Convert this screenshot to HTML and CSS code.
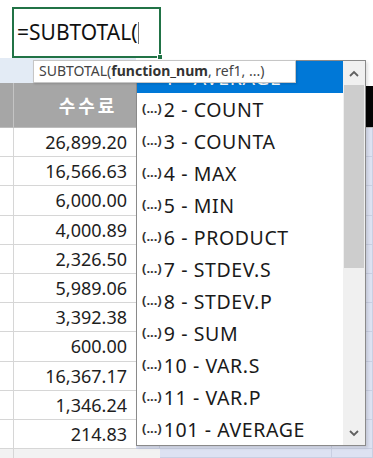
FILE: index.html
```html
<!DOCTYPE html>
<html lang="ko">
<head>
    <meta charset="UTF-8">
    <title>SUBTOTAL</title>
    <link rel="stylesheet" href="styles.css">
</head>
<body>
    <div class="sheet">
        <div class="editor-row">
            <div class="cell-editor">
                <span class="formula">=SUBTOTAL(</span><span class="caret"></span>
                <span class="fill-handle"></span>
            </div>
        </div>

        <div class="grid">
            <!-- strip row -->
            <div class="c strip"></div>
            <div class="c strip"></div>
            <div class="c blank"></div>
            <div class="c blank"></div>
            <div class="c blank"></div>

            <!-- header row -->
            <div class="c head"></div>
            <div class="c head title">수수료</div>
            <div class="c head dark"></div>
            <div class="c head dark"></div>
            <div class="c head dark"></div>

            <div class="c a"></div><div class="c num">26,899.20</div><div class="c lav"></div><div class="c lav"></div><div class="c lav"></div>
            <div class="c a"></div><div class="c num">16,566.63</div><div class="c lav"></div><div class="c lav"></div><div class="c lav"></div>
            <div class="c a"></div><div class="c num">6,000.00</div><div class="c lav"></div><div class="c lav"></div><div class="c lav"></div>
            <div class="c a"></div><div class="c num">4,000.89</div><div class="c lav"></div><div class="c lav"></div><div class="c lav"></div>
            <div class="c a"></div><div class="c num">2,326.50</div><div class="c lav"></div><div class="c lav"></div><div class="c lav"></div>
            <div class="c a"></div><div class="c num">5,989.06</div><div class="c lav"></div><div class="c lav"></div><div class="c lav"></div>
            <div class="c a"></div><div class="c num">3,392.38</div><div class="c lav"></div><div class="c lav"></div><div class="c lav"></div>
            <div class="c a"></div><div class="c num">600.00</div><div class="c lav"></div><div class="c lav"></div><div class="c lav"></div>
            <div class="c a"></div><div class="c num">16,367.17</div><div class="c lav"></div><div class="c lav"></div><div class="c lav"></div>
            <div class="c a"></div><div class="c num">1,346.24</div><div class="c lav"></div><div class="c lav"></div><div class="c lav"></div>
            <div class="c a"></div><div class="c num">214.83</div><div class="c lav"></div><div class="c lav"></div><div class="c lav"></div>

            <!-- total row (cut off) -->
            <div class="c total a"></div><div class="c total"></div><div class="c total"></div><div class="c lav"></div><div class="c lav"></div>
        </div>

        <div class="tooltip">SUBTOTAL(<b>function_num</b>, ref1, ...)</div>

        <div class="dropdown">
            <ul class="items">
                <li class="selected"><span class="ico">(...)</span>1 - AVERAGE</li>
                <li><span class="ico">(...)</span>2 - COUNT</li>
                <li><span class="ico">(...)</span>3 - COUNTA</li>
                <li><span class="ico">(...)</span>4 - MAX</li>
                <li><span class="ico">(...)</span>5 - MIN</li>
                <li><span class="ico">(...)</span>6 - PRODUCT</li>
                <li><span class="ico">(...)</span>7 - STDEV.S</li>
                <li><span class="ico">(...)</span>8 - STDEV.P</li>
                <li><span class="ico">(...)</span>9 - SUM</li>
                <li><span class="ico">(...)</span>10 - VAR.S</li>
                <li><span class="ico">(...)</span>11 - VAR.P</li>
                <li><span class="ico">(...)</span>101 - AVERAGE</li>
            </ul>
            <div class="scrollbar">
                <div class="arrow">
                    <svg width="10" height="7" viewBox="0 0 10 7"><path d="M1 6 L5 2 L9 6" fill="none" stroke="#606060" stroke-width="1.8"/></svg>
                </div>
                <div class="thumb"></div>
                <div class="track"></div>
                <div class="arrow">
                    <svg width="10" height="7" viewBox="0 0 10 7"><path d="M1 1 L5 5 L9 1" fill="none" stroke="#606060" stroke-width="1.8"/></svg>
                </div>
            </div>
        </div>
    </div>
</body>
</html>
```

FILE: styles.css
```css
* {
    box-sizing: border-box;
}

body {
    margin: 0;
    background: #fff;
    font-family: "Noto Sans", "Noto Sans CJK KR", sans-serif;
    color: #222;
}

.sheet {
    position: relative;
    width: 373px;
    height: 458px;
    overflow: hidden;
}

.editor-row {
    height: 58px;
    padding: 7px 0 0 12px;
}

.cell-editor {
    position: relative;
    width: 149px;
    height: 51px;
    border: 2px solid #217346;
    padding: 9px 0 0 3px;
    display: flex;
    align-items: flex-start;
}

.formula {
    font-size: 21px;
    line-height: 28px;
    color: #111;
}

.caret {
    width: 1px;
    height: 22px;
    margin-top: 4px;
    background: #777;
}

.fill-handle {
    position: absolute;
    right: -4px;
    bottom: -4px;
    width: 6px;
    height: 6px;
    background: #217346;
    border: 1px solid #fff;
}

.grid {
    display: grid;
    grid-template-columns: 14px 122px 24px 172px 41px;
    grid-template-rows: 25px 45px repeat(11, 29.2px) 1fr;
    height: 400px;
}

.c {
    border-bottom: 1px solid #d6d6d6;
}

.strip {
    background: #e3ebf5;
    border-bottom: none;
}

.blank {
    border-bottom: none;
}

.head {
    background: #a6a6a6;
    border-bottom: 1px solid #bdbdbd;
}

.head:first-child,
.grid .head:nth-child(6) {
    border-right: 1px solid #c4c4c4;
}

.title {
    color: #fff;
    font-family: "Noto Sans CJK KR", sans-serif;
    font-weight: 700;
    font-size: 18px;
    letter-spacing: 3px;
    display: flex;
    align-items: center;
    justify-content: center;
    padding-left: 26px;
}

.dark {
    background: #050505;
    border-top: 3px solid #fff;
}

.a {
    border-right: 1px solid #d6d6d6;
}

.num {
    text-align: right;
    padding-right: 9px;
    font-size: 18px;
    line-height: 29px;
    color: #1e1e1e;
}

.lav {
    background: #dde2f2;
    border-bottom: 1px solid #c9cfe2;
    border-right: 1px solid #c9cfe2;
}

.total {
    background: #f2f2f2;
    border-bottom: none;
}

.tooltip {
    position: absolute;
    left: 33px;
    top: 60px;
    width: 263px;
    height: 23px;
    background: #fff;
    border: 1px solid #c6c6c6;
    box-shadow: 1px 1px 2px rgba(0, 0, 0, 0.15);
    z-index: 2;
    padding-left: 5px;
    font-size: 14px;
    line-height: 20px;
    color: #444;
    white-space: nowrap;
}

.tooltip b {
    font-weight: 700;
    color: #333;
}

.dropdown {
    position: absolute;
    left: 136px;
    top: 60px;
    width: 230px;
    height: 386px;
    background: #fff;
    border: 1px solid #8a8a8a;
    box-shadow: 2px 2px 3px rgba(0, 0, 0, 0.12);
    display: flex;
    z-index: 1;
}

.items {
    list-style: none;
    margin: 0;
    padding: 0;
    flex: 1;
}

.items li {
    height: 32px;
    display: flex;
    align-items: center;
    padding-left: 5px;
    font-size: 19.5px;
    letter-spacing: 0.6px;
    color: #1a1a1a;
    white-space: nowrap;
}

.items li.selected {
    background: #0078d7;
    color: #fff;
}

.ico {
    font-size: 13px;
    font-weight: 700;
    letter-spacing: 0;
    margin-right: 2px;
    color: #333;
    padding-bottom: 3px;
}

.selected .ico {
    color: #fff;
}

.scrollbar {
    width: 22px;
    background: #f0f0f0;
    display: flex;
    flex-direction: column;
}

.arrow {
    height: 24px;
    display: flex;
    align-items: center;
    justify-content: center;
}

.thumb {
    height: 183px;
    margin: 0 1px;
    background: #cdcdcd;
}

.track {
    flex: 1;
}
```
